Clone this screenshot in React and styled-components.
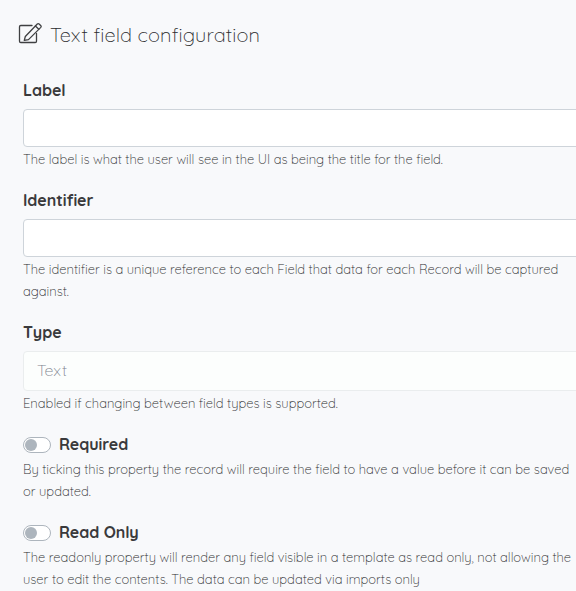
import React from "react";
import styled, { createGlobalStyle } from "styled-components";

const GlobalStyle = createGlobalStyle`
  * { box-sizing: border-box; }
  body {
    margin: 0;
    background: #f8f9fb;
    color: #3a3a3c;
    font-family: Quicksand, Inter, sans-serif;
    overflow: hidden;
  }
`;

const Panel = styled.main`
  min-height: 591px;
  padding: 18px 0 0 23px;
  overflow: hidden;
`;

const Header = styled.header`
  display: flex;
  align-items: center;
  gap: 8px;
  height: 34px;
  margin: 0 0 26px -5px;
`;

const Title = styled.h1`
  margin: 0;
  font-size: 20px;
  font-weight: 300;
  line-height: 34px;
  letter-spacing: 0.12px;
  white-space: nowrap;
  color: #2a2b2d;
`;

const Form = styled.form`
  display: flex;
  flex-direction: column;
  gap: 18px;
`;

const Field = styled.div`
  display: flex;
  flex-direction: column;
`;

const Label = styled.label`
  font-size: 16px;
  font-weight: 700;
  line-height: 24px;
  letter-spacing: -0.05px;
`;

const Input = styled.input`
  width: 580px;
  height: ${(p) => (p.disabled ? 40 : 38)}px;
  margin: 7px 0 1px;
  padding: 0 13px 2px;
  border: 1px solid ${(p) => (p.disabled ? "#eaedee" : "#ced4da")};
  border-radius: 4px;
  outline: 0;
  background: ${(p) => (p.disabled ? "#fcfefd" : "#fff")};
  color: #7d838e;
  font: 300 16px Quicksand, Inter, sans-serif;
`;

const Help = styled.div`
  font-size: 13px;
  font-weight: 300;
  line-height: 22px;
  color: #2a2b2d;
`;

const Line = styled.span`
  display: block;
  white-space: nowrap;
`;

const SwitchRow = styled.div`
  display: flex;
  align-items: center;
  gap: 8px;
  height: 26px;
`;

const SwitchLabel = styled(Label)`
  line-height: 22px;
  padding-bottom: 2px;
`;

const Switch = styled.button`
  display: flex;
  align-items: center;
  width: 28px;
  height: 16px;
  padding: 0 1px;
  border: 1px solid #adb5bd;
  border-radius: 8px;
  background: #fff;
`;

const Knob = styled.span`
  width: 12px;
  height: 12px;
  border-radius: 50%;
  background: #adb5bd;
`;

const Icon = styled.svg`
  flex: none;
  overflow: visible;
`;

const EditIcon = () => (
  <Icon width="24" height="24" viewBox="0 2 24 24" fill="none" stroke="#3f4042" strokeWidth="1.3" strokeLinejoin="round" strokeLinecap="round">
    <path d="M14 4.500H2.800A1.300 1.300 0 0 0 1.500 5.800V20.200A1.300 1.300 0 0 0 2.800 21.500H17.200A1.300 1.300 0 0 0 18.500 20.200V12.500" />
    <path d="M6.300 19.400L7.300 15.500L19.300 3Q20.200 2.200 21.100 3L22.900 4.700Q23.600 5.500 22.800 6.400L10.500 18.600Z" />
    <path d="M17.400 5L20.800 8.300" />
  </Icon>
);

const HelpText = ({ lines }) => (
  <Help>
    {lines.map((text) => (
      <Line key={text}>{text}</Line>
    ))}
  </Help>
);

const TextField = ({ id, label, lines, ...input }) => (
  <Field>
    <Label htmlFor={id}>{label}</Label>
    <Input id={id} {...input} />
    <HelpText lines={lines} />
  </Field>
);

const SwitchField = ({ id, label, lines }) => (
  <Field>
    <SwitchRow>
      <Switch id={id} type="button" role="switch" aria-checked="false">
        <Knob />
      </Switch>
      <SwitchLabel htmlFor={id}>{label}</SwitchLabel>
    </SwitchRow>
    <HelpText lines={lines} />
  </Field>
);

export default function App() {
  return (
    <Panel>
      <GlobalStyle />
      <Header>
        <EditIcon />
        <Title>Text field configuration</Title>
      </Header>
      <Form>
        <TextField
          id="label"
          label="Label"
          lines={["The label is what the user will see in the UI as being the title for the field."]}
        />
        <TextField
          id="identifier"
          label="Identifier"
          lines={[
            "The identifier is a unique reference to each Field that data for each Record will be captured",
            "against.",
          ]}
        />
        <TextField
          id="type"
          label="Type"
          defaultValue="Text"
          disabled
          lines={["Enabled if changing between field types is supported."]}
        />
        <SwitchField
          id="required"
          label="Required"
          lines={[
            "By ticking this property the record will require the field to have a value before it can be saved",
            "or updated.",
          ]}
        />
        <SwitchField
          id="readonly"
          label="Read Only"
          lines={[
            "The readonly property will render any field visible in a template as read only, not allowing the",
            "user to edit the contents. The data can be updated via imports only",
          ]}
        />
      </Form>
    </Panel>
  );
}
